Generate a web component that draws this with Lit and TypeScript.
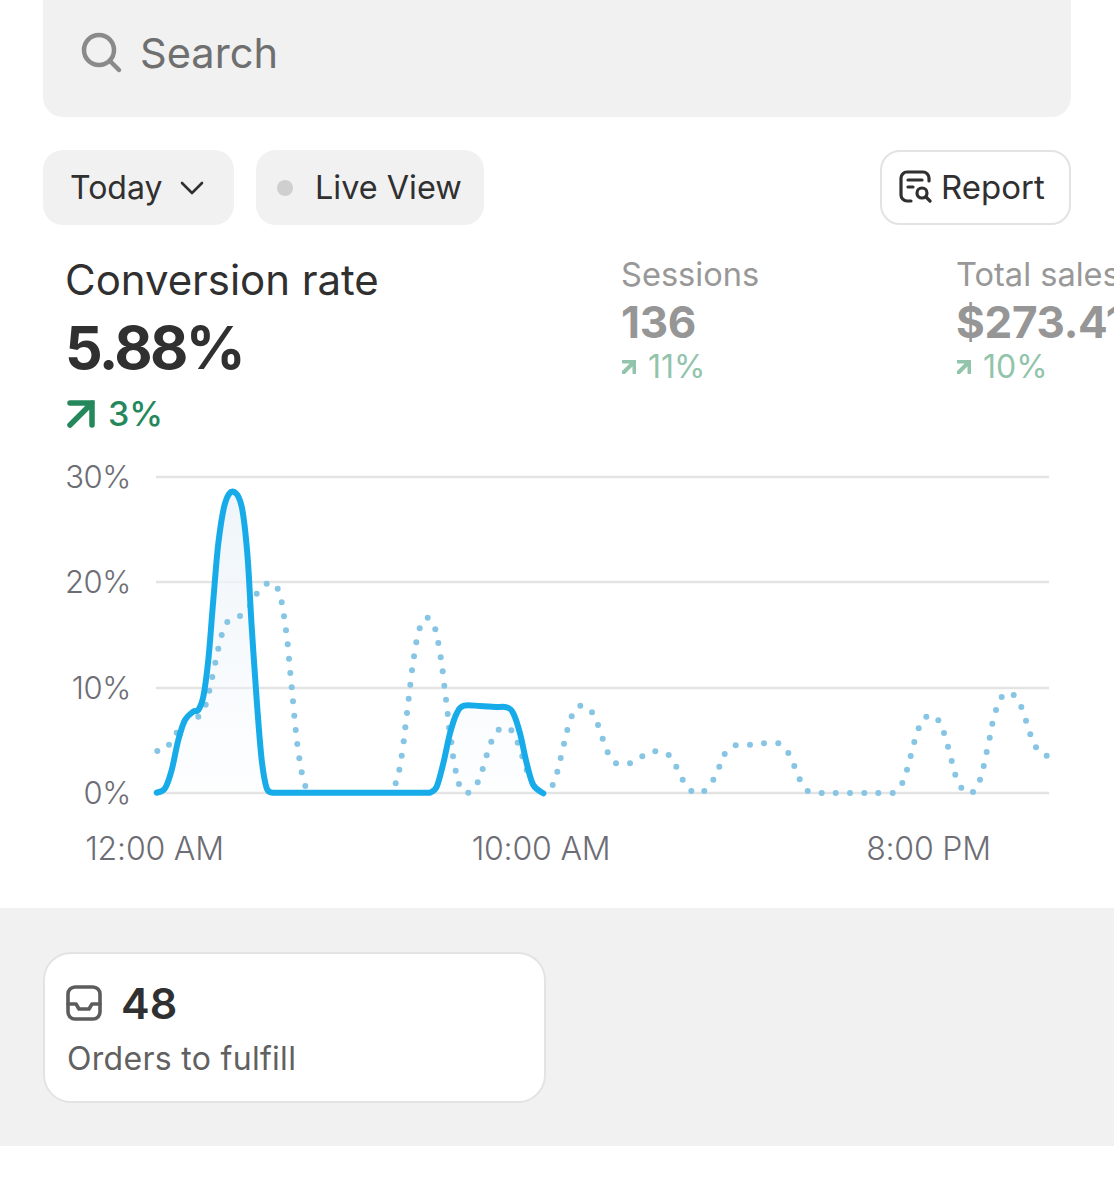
import { LitElement, html, css, svg } from 'lit';
import { customElement } from 'lit/decorators.js';

type Pt = [number, number];

// zero line and grid of the chart, in page pixels
const GRID = [477, 582, 688, 793];
const Y_LABELS = ['30%', '20%', '10%', '0%'];
const X_LABELS: [string, number][] = [['12:00 AM', 154.5], ['10:00 AM', 541], ['8:00 PM', 928.5]];

// points are read off at 3x, so they get scaled back here
const toPts = (ox: number, oy: number, raw: number[][]): Pt[] => raw.map(([x, y]) => [+(ox + x / 3).toFixed(1), +(oy + y / 3).toFixed(1)] as Pt);

const HUMP_A = toPts(50, 460, [[320, 998], [345, 985], [365, 930], [385, 840], [405, 780], [430, 755], [445, 750], [460, 710], [475, 600], [490, 420], [505, 250], [525, 130], [550, 95], [575, 140], [592, 280], [605, 500], [620, 720], [635, 900], [650, 985], [668, 998]]);
const HUMP_B = toPts(380, 590, [[150, 608], [170, 590], [190, 520], [210, 430], [230, 370], [252, 347], [300, 348], [345, 351], [380, 352], [400, 370], [420, 430], [440, 520], [460, 585], [490, 610]]);

// dots of the comparison series, in three groups
const DOTS: Pt[] = [
  ...toPts(50, 460, [[322, 873], [357, 854], [380, 818], [445, 770], [467, 734], [478, 692], [487, 651], [496, 608], [505, 566], [515, 525], [532, 486], [570, 468], [600, 437], [620, 401], [650, 371], [683, 386], [695, 427], [702, 469], [708, 511], [713, 553], [717, 596], [721, 639], [725, 682], [729, 724], [733, 767], [737, 810], [742, 852], [748, 895], [755, 937], [766, 978]]),
  ...toPts(380, 590, [[47, 580], [58, 539], [65, 497], [71, 454], [76, 412], [81, 369], [86, 326], [91, 284], [96, 241], [102, 199], [109, 157], [119, 115], [143, 83], [166, 118], [175, 159], [182, 202], [188, 244], [193, 287], [198, 329], [203, 372], [207, 413], [214, 457], [219, 499], [227, 542], [237, 582], [265, 608], [293, 577], [308, 537], [320, 496], [334, 455], [356, 419], [394, 421], [413, 458], [427, 499], [440, 540], [518, 585], [532, 545], [542, 504], [552, 461], [562, 420], [575, 379], [601, 347], [636, 367], [654, 405], [668, 446], [683, 487], [708, 520], [750, 520], [787, 499], [826, 484], [866, 495], [889, 530], [908, 569], [934, 603], [973, 603], [1000, 569]]),
  ...toPts(720, 660, [[-2, 320], [14, 282], [47, 256], [90, 254], [132, 250], [175, 250], [205, 279], [223, 318], [239, 358], [263, 393], [305, 399], [347, 399], [390, 399], [433, 399], [475, 399], [518, 399], [547, 369], [561, 329], [572, 288], [583, 246], [596, 205], [619, 170], [655, 181], [672, 219], [684, 260], [695, 303], [706, 344], [724, 383], [759, 396], [780, 359], [791, 318], [800, 276], [809, 233], [817, 191], [828, 150], [845, 111], [881, 105], [904, 141], [918, 182], [931, 223], [948, 262], [980, 287]]),
];

// catmull-rom through the points, as cubic segments
function curve(p: Pt[]) {
  let d = '';
  for (let i = 0; i < p.length - 1; i++) {
    const a = p[Math.max(i - 1, 0)];
    const b = p[i];
    const c = p[i + 1];
    const e = p[Math.min(i + 2, p.length - 1)];
    const c1 = [b[0] + (c[0] - a[0]) / 6, b[1] + (c[1] - a[1]) / 6];
    const c2 = [c[0] - (e[0] - b[0]) / 6, c[1] - (e[1] - b[1]) / 6];
    d += `C${c1[0].toFixed(1)} ${c1[1].toFixed(1)} ${c2[0].toFixed(1)} ${c2[1].toFixed(1)} ${c[0]} ${c[1]}`;
  }
  return d;
}

const LINE = `M${HUMP_A[0].join(' ')}${curve(HUMP_A)}L${HUMP_B[0].join(' ')}${curve(HUMP_B)}`;

const upArrow = (size: number, weight: number) => html`
  <svg class="arrow" width=${size} height=${size} viewBox="0 0 28 28" fill="none" stroke="currentColor" stroke-width=${weight} stroke-linecap="round" stroke-linejoin="miter">
    <path d="M3 3H25V25M25 3L3 25" />
  </svg>
`;

@customElement('app-root')
export class AppRoot extends LitElement {
  static styles = css`
    :host {
      display: block;
      width: 1114px;
      height: 1200px;
      overflow: hidden;
      background: #fff;
      font-family: Inter, 'Liberation Sans', sans-serif;
      color: #303030;
    }
    .top {
      padding: 0 43px;
    }
    .search {
      height: 117px;
      background: #f1f1f1;
      border-radius: 0 0 20px 20px;
      display: flex;
      align-items: center;
      gap: 17px;
      padding-left: 38px;
      padding-bottom: 11px;
      box-sizing: border-box;
      font-size: 41.6px;
      color: #6f6f6f;
    }
    .filters {
      display: flex;
      gap: 22px;
      margin-top: 33px;
    }
    .chip {
      height: 75px;
      box-sizing: border-box;
      border-radius: 20px;
      background: #f1f1f1;
      display: flex;
      align-items: center;
      font-size: 32px;
    }
    .chip.today {
      width: 191px;
      padding-left: 27px;
      gap: 18px;
    }
    .chip.live {
      width: 228px;
      padding-left: 21px;
      gap: 22px;
      font-size: 32.4px;
    }
    .dot {
      width: 16px;
      height: 16px;
      border-radius: 50%;
      background: #cfcfcf;
    }
    .chip.report {
      width: 191px;
      margin-left: auto;
      background: #fff;
      border: 2.5px solid #e3e3e3;
      padding: 0 0 2px 17px;
      gap: 9px;
      font-size: 33px;
    }
    .metrics {
      height: 230px;
      padding-left: 65px;
      display: grid;
      grid-template-columns: 556px 335px max-content;
      white-space: nowrap;
    }
    .main {
      padding-top: 29px;
    }
    .main .label {
      font-size: 42px;
      line-height: 52px;
      letter-spacing: -0.05px;
    }
    .main .value {
      font-size: 59px;
      font-weight: 700;
      line-height: 72px;
      letter-spacing: -2.6px;
      margin-top: 6px;
    }
    .main .delta {
      font-size: 34px;
      font-weight: 500;
      line-height: 44px;
      color: #24885c;
      display: flex;
      align-items: center;
      gap: 13px;
      margin-top: 8px;
      margin-left: 2px;
    }
    .side {
      padding-top: 29px;
    }
    .side .label {
      font-size: 32.6px;
      line-height: 40px;
      color: #989898;
    }
    .side .value {
      font-size: 44px;
      font-weight: 700;
      line-height: 54px;
      letter-spacing: -0.3px;
      margin-top: 1px;
      color: #969696;
    }
    .side .delta {
      font-size: 32px;
      line-height: 36px;
      color: #92c4ac;
      display: flex;
      align-items: center;
      gap: 12px;
      margin-left: 1px;
    }
    .arrow {
      display: block;
      flex: none;
    }
    .chart {
      display: block;
    }
    .chart text {
      font-size: 32px;
      font-weight: 300;
      fill: #6d6d75;
    }
    .chart text.y {
      font-size: 31px;
      letter-spacing: -0.4px;
    }
    .chart text.x {
      letter-spacing: -0.2px;
    }
    .band {
      height: 238px;
      box-sizing: border-box;
      background: #f1f1f1;
      padding: 44px 43px;
    }
    .card {
      width: 503px;
      height: 151px;
      box-sizing: border-box;
      border: 2.5px solid #e3e3e3;
      border-radius: 28px;
      background: #fff;
      padding: 24px 21px;
    }
    .count {
      display: flex;
      align-items: center;
      gap: 19px;
      font-size: 43px;
      font-weight: 600;
      line-height: 50px;
    }
    .caption {
      font-size: 32px;
      line-height: 40px;
      letter-spacing: 0.3px;
      color: #616161;
      margin-top: 11px;
      margin-left: 1px;
    }
  `;

  renderChart() {
    return html`
      <svg class="chart" width="1114" height="453" viewBox="0 455 1114 453">
        <defs>
          <linearGradient id="under" x1="0" y1="492" x2="0" y2="793" gradientUnits="userSpaceOnUse">
            <stop offset="0" stop-color="#eff5fa" />
            <stop offset="1" stop-color="#eff5fa" stop-opacity="0.1" />
          </linearGradient>
        </defs>
        ${GRID.map((y, i) => svg`
          <line x1="156" x2="1049" y1=${y} y2=${y} stroke="#e3e3e3" stroke-width="2.5" />
          <text class="y" x="131" y=${y + 11} text-anchor="end">${Y_LABELS[i]}</text>
        `)}
        <path d="${LINE}Z" fill="url(#under)" />
        ${DOTS.map(([x, y]) => svg`<circle cx=${x} cy=${y} r="3" fill="#86c5e3" />`)}
        <path d=${LINE} fill="none" stroke="#17ace9" stroke-width="6" stroke-linecap="round" stroke-linejoin="round" />
        ${X_LABELS.map(([t, x]) => svg`<text class="x" x=${x} y="860" text-anchor="middle">${t}</text>`)}
      </svg>
    `;
  }

  render() {
    return html`
      <div class="top">
        <div class="search">
          <svg width="42" height="42" viewBox="0 0 42 42" fill="none" stroke="#8a8a8a" stroke-width="4.5" stroke-linecap="round">
            <circle cx="18" cy="18" r="15" />
            <path d="M29 29L38 38" />
          </svg>
          <span>Search</span>
        </div>
        <div class="filters">
          <div class="chip today">
            <span>Today</span>
            <svg width="24" height="16" viewBox="0 0 24 16" fill="none" stroke="#303030" stroke-width="2.6" stroke-linecap="round" stroke-linejoin="round">
              <path d="M2 3L12 13L22 3" />
            </svg>
          </div>
          <div class="chip live"><span class="dot"></span><span>Live View</span></div>
          <div class="chip report">
            <svg width="33" height="33" viewBox="0 0 33 33" fill="none" stroke="#303030" stroke-width="3.2" stroke-linecap="round" stroke-linejoin="round">
              <path d="M30 11V8A6 6 0 0 0 24 2H8A6 6 0 0 0 2 8V25A6 6 0 0 0 8 31H12" />
              <path d="M9 10H23M9 17H14" />
              <circle cx="23" cy="23" r="5" />
              <path d="M27 27L31 31" />
            </svg>
            <span>Report</span>
          </div>
        </div>
      </div>
      <div class="metrics">
        <div class="main">
          <div class="label">Conversion rate</div>
          <div class="value">5.88%</div>
          <div class="delta">${upArrow(28, 5.5)}<span>3%</span></div>
        </div>
        <div class="side">
          <div class="label">Sessions</div>
          <div class="value">136</div>
          <div class="delta">${upArrow(14, 8)}<span>11%</span></div>
        </div>
        <div class="side">
          <div class="label">Total sales</div>
          <div class="value">$273.41</div>
          <div class="delta">${upArrow(14, 8)}<span>10%</span></div>
        </div>
      </div>
      ${this.renderChart()}
      <div class="band">
        <div class="card">
          <div class="count">
            <svg width="36" height="36" viewBox="0 0 36 36" fill="none" stroke="#5c5c5c" stroke-width="3.6" stroke-linejoin="round" stroke-linecap="round">
              <rect x="2" y="2" width="32" height="32" rx="7" />
              <path d="M2 19H10L13 24H23L26 19H34" />
            </svg>
            <span>48</span>
          </div>
          <div class="caption">Orders to fulfill</div>
        </div>
      </div>
    `;
  }
}
